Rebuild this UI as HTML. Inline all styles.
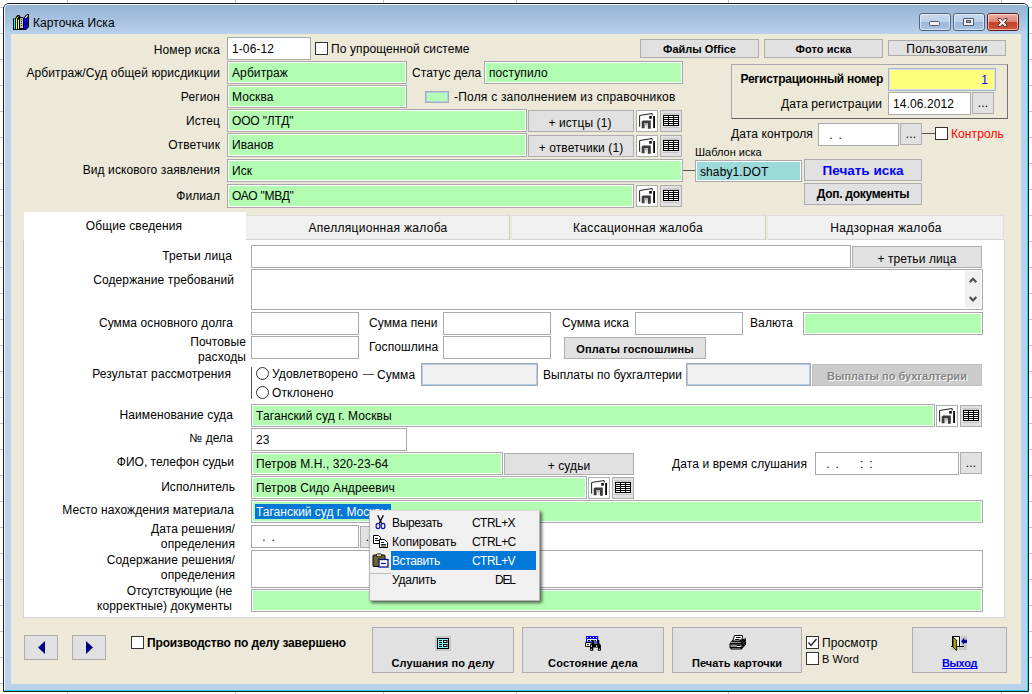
<!DOCTYPE html>
<html lang="ru">
<head>
<meta charset="utf-8">
<title>Карточка Иска</title>
<style>
*{box-sizing:border-box;margin:0;padding:0}
html,body{width:1032px;height:694px;overflow:hidden;background:#fff}
body{position:relative;font-family:"Liberation Sans",Arial,sans-serif;font-size:12px;color:#000;line-height:14px;letter-spacing:0.1px}
.abs,.l,.lr,.f,.b,.ib,.cb,.tab{position:absolute}
/* sheet gridlines behind window */
.gv{position:absolute;top:0;width:1px;height:694px;background:#c4c4c4}
.gh{position:absolute;left:0;width:1032px;height:1px;background:#c4c4c4}
/* window */
#win{position:absolute;left:3px;top:3px;width:1026px;height:689px;border:1px solid #1c1c1c;border-radius:6px 6px 0 0;background:#b9d1ea;overflow:hidden}
#titlegrad{position:absolute;left:0;top:0;width:1024px;height:30px;background:linear-gradient(#98b2d2 0,#a5bfdf 45%,#b9d1ea 100%)}
#inner{position:absolute;left:0;top:0;width:1024px;height:687px;border:1px solid #f0f6fc;border-bottom-color:#20d8f8;border-right-color:#20d8f8;border-radius:5px 5px 0 0}
#client{position:absolute;left:11px;top:34px;width:1010px;height:650px;background:#ece9d8}
/* labels */
.l{white-space:nowrap;height:14px;margin-top:1px}
.lr{white-space:nowrap;text-align:right;height:14px;margin-top:1px}
/* fields */
.f{height:23px;border:1px solid #a9a9a9;box-shadow:inset 0 0 0 1px #fff;background:#fff;padding:4px 0 0 4px;white-space:nowrap;overflow:hidden}
.g{background:#b3fdb3}
.dis{background:#f0f0f0;border-color:#a4a8ae;box-shadow:inset 0 0 0 1px #b4cceb}
/* buttons */
.b{border:1px solid #adadad;background:#e1e1e1;text-align:center;white-space:nowrap;overflow:hidden}
.bold{font-weight:bold;letter-spacing:-0.27px}
.ib{width:22px;height:22px;border:1px solid #adadad;background:#e1e1e1}
.ib.w{background:#fdfdfd}
.cb{width:13px;height:13px;border:1px solid #333;background:#fff}
.m{font-size:12px;letter-spacing:-0.15px}
.ic1,.ic2{position:absolute;left:0;top:0;width:20px;height:20px}

.tb{position:absolute;top:13px;height:18px;border:1px solid #4e647e;border-radius:3px;background:linear-gradient(#c6d8ee 0,#bcd0e8 48%,#9cb8da 52%,#a8c2e2 100%)}
.tbi{position:absolute;left:0;top:0;right:0;bottom:0;border:1px solid rgba(255,255,255,.55);border-radius:2px}
.tc{border-color:#5e1c1c;background:linear-gradient(#eab0a0 0,#dc8878 48%,#c4402a 52%,#d2583c 100%)}
</style>
</head>
<body>
<!-- background sheet grid -->
<div class="gv" style="left:67px"></div><div class="gv" style="left:235px"></div><div class="gv" style="left:383px"></div><div class="gv" style="left:516px"></div><div class="gv" style="left:728px"></div><div class="gv" style="left:1001px"></div>
<div class="gh" style="top:7px"></div><div class="gh" style="top:33px"></div><div class="gh" style="top:59px"></div><div class="gh" style="top:85px"></div><div class="gh" style="top:111px"></div><div class="gh" style="top:137px"></div><div class="gh" style="top:163px"></div><div class="gh" style="top:189px"></div><div class="gh" style="top:215px"></div><div class="gh" style="top:241px"></div><div class="gh" style="top:267px"></div><div class="gh" style="top:293px"></div><div class="gh" style="top:319px"></div><div class="gh" style="top:345px"></div><div class="gh" style="top:371px"></div><div class="gh" style="top:397px"></div><div class="gh" style="top:423px"></div><div class="gh" style="top:449px"></div><div class="gh" style="top:475px"></div><div class="gh" style="top:501px"></div><div class="gh" style="top:527px"></div><div class="gh" style="top:553px"></div><div class="gh" style="top:579px"></div><div class="gh" style="top:605px"></div><div class="gh" style="top:631px"></div><div class="gh" style="top:657px"></div><div class="gh" style="top:683px"></div>

<div id="win">
<div id="titlegrad"></div>
<div id="inner"></div>
</div>
<div id="client"></div>

<!-- TITLE -->
<svg class="abs" style="left:13px;top:14px" width="16" height="16" viewBox="0 0 16 16">
<path d="M0 16V4.5H2L4.3 1H6.5L7.5 3H10V16Z" fill="#000"/>
<path d="M10 16V4L14 0H16V13L13 16Z" fill="#000"/>
<rect x="1" y="5" width="1" height="10" fill="#00ffff"/>
<path d="M3 15V4.5L5.5 2V3L4 4.5V15Z" fill="#ffff00"/>
<rect x="5" y="5.5" width="1" height="9.5" fill="#e4e4e4"/>
<rect x="7" y="4" width="3" height="10" fill="#c8c0b0"/>
<rect x="8" y="5" width="1" height="1" fill="#1a2a80"/><rect x="8" y="7" width="1" height="1" fill="#1a2a80"/><rect x="8" y="9" width="1" height="1" fill="#1a2a80"/><rect x="8" y="11" width="1" height="1" fill="#1a2a80"/>
<rect x="11" y="4" width="2" height="11" fill="#0000ff"/>
<rect x="14" y="3" width="1" height="10.5" fill="#0000ff"/>
<path d="M11.5 3.8L14 1.2H15V2L13 4Z" fill="#f0dede"/>
</svg>
<div class="tb" style="left:919px;width:32px"><div class="tbi"></div><div class="abs" style="left:9px;top:7px;width:11px;height:5px;border:1px solid #4a5a70;border-radius:1.5px;background:#f4f0e8"></div></div>
<div class="tb" style="left:953px;width:32px"><div class="tbi"></div><div class="abs" style="left:9px;top:4px;width:11px;height:8px;border:1px solid #4a5a70;border-radius:1px;background:#f4f0e8"></div><div class="abs" style="left:12px;top:6px;width:5px;height:3px;border:1px solid #4a5a70;background:#8aa6c8"></div></div>
<div class="tb tc" style="left:987px;width:32px"><div class="tbi"></div><svg class="abs" style="left:8px;top:2.5px" width="13" height="11" viewBox="0 0 13 11"><path d="M2 1.5 L4.3 1.5 L6.5 3.7 L8.7 1.5 L11 1.5 L11 3 L8.5 5.5 L11 8 L11 9.5 L8.7 9.5 L6.5 7.3 L4.3 9.5 L2 9.5 L2 8 L4.5 5.5 L2 3Z" fill="#f4f0ec" stroke="#5a3030" stroke-width="1"/></svg></div>

<div class="l" style="left:33px;top:15px;font-size:12px">Карточка Иска</div>

<!-- TOP SECTION -->
<div class="lr" style="left:20px;width:200px;top:42px">Номер иска</div>
<div class="f" style="left:227px;top:37px;width:84px">1-06-12</div>
<div class="cb" style="left:315px;top:42px"></div>
<div class="l" style="left:331px;top:41px">По упрощенной системе</div>

<div class="lr" style="left:20px;width:200px;top:65px">Арбитраж/Суд общей юрисдикции</div>
<div class="f g" style="left:227px;top:61px;width:180px">Арбитраж</div>
<div class="l" style="left:412px;top:65px">Статус дела</div>
<div class="f g" style="left:484px;top:61px;width:199px">поступило</div>

<div class="lr" style="left:20px;width:200px;top:89px">Регион</div>
<div class="f g" style="left:227px;top:85px;width:180px">Москва</div>
<div class="abs" style="left:425px;top:91px;width:24px;height:12px;background:#b3fdb3;border:1px solid #a4acb8;box-shadow:inset 0 0 0 1px #b4cceb"></div>
<div class="l" style="left:454px;top:89px;letter-spacing:0.21px">-Поля с заполнением из справочников</div>

<div class="lr" style="left:20px;width:200px;top:113px">Истец</div>
<div class="f g" style="left:227px;top:109px;width:300px;letter-spacing:-0.15px">ООО "ЛТД"</div>
<div class="b" style="left:528px;top:110px;width:106px;height:22px;padding:5px 2px 0 0">+ истцы (1)</div>

<div class="lr" style="left:20px;width:200px;top:137px">Ответчик</div>
<div class="f g" style="left:227px;top:133px;width:300px;height:24px">Иванов</div>
<div class="b" style="left:528px;top:135px;width:106px;height:22px;padding-top:5px">+ ответчики (1)</div>

<div class="lr" style="left:20px;width:200px;top:162px">Вид искового заявления</div>
<div class="f g" style="left:227px;top:159px;width:456px">Иск</div>

<div class="lr" style="left:20px;width:200px;top:188px">Филиал</div>
<div class="f g" style="left:227px;top:184px;width:407px;height:24px;letter-spacing:-0.25px">ОАО "МВД"</div>


<!-- icon buttons top -->
<div class="ib w" style="left:636px;top:110px"><svg class="ic1" viewBox="0 0 20 20"><path d="M2.6 15.7V4.5L15.2 2.5V4.6" fill="none" stroke="#222" stroke-width="1"/><rect x="12.2" y="5" width="2.6" height="2.7" fill="#111"/><rect x="16.2" y="5" width="1.8" height="12" fill="#000"/><path d="M4.7 17.3V10.6L6 9.6H13.8V17.8H10.9V12H7.6V17.3Z" fill="#3c3c3c"/><rect x="7.6" y="12" width="3.3" height="2.6" fill="#b4b4b4"/><rect x="3.6" y="11" width="1.1" height="5.5" fill="#c4c4c4"/><rect x="8.6" y="14.6" width="2.3" height="2.7" fill="#e0e0e0"/></svg></div>
<div class="ib" style="left:660px;top:110px"><svg class="ic2" viewBox="0 0 20 20"><rect x="2" y="2.5" width="16" height="1" fill="#b5b5b5"/><rect x="2" y="4" width="16" height="11" fill="#000"/><rect x="3" y="5" width="4" height="1" fill="#fff"/><rect x="8" y="5" width="4" height="1" fill="#fff"/><rect x="13" y="5" width="4" height="1" fill="#fff"/><rect x="3" y="7" width="4" height="1" fill="#fff"/><rect x="8" y="7" width="4" height="1" fill="#fff"/><rect x="13" y="7" width="4" height="1" fill="#fff"/><rect x="3" y="9" width="4" height="1" fill="#fff"/><rect x="8" y="9" width="4" height="1" fill="#fff"/><rect x="13" y="9" width="4" height="1" fill="#fff"/><rect x="3" y="11" width="4" height="1" fill="#fff"/><rect x="8" y="11" width="4" height="1" fill="#fff"/><rect x="13" y="11" width="4" height="1" fill="#fff"/><rect x="3" y="13" width="4" height="1" fill="#fff"/><rect x="8" y="13" width="4" height="1" fill="#fff"/><rect x="13" y="13" width="4" height="1" fill="#fff"/><rect x="2" y="16" width="16" height="1" fill="#c4c4c4"/></svg></div>
<div class="ib w" style="left:636px;top:135px"><svg class="ic1" viewBox="0 0 20 20"><path d="M2.6 15.7V4.5L15.2 2.5V4.6" fill="none" stroke="#222" stroke-width="1"/><rect x="12.2" y="5" width="2.6" height="2.7" fill="#111"/><rect x="16.2" y="5" width="1.8" height="12" fill="#000"/><path d="M4.7 17.3V10.6L6 9.6H13.8V17.8H10.9V12H7.6V17.3Z" fill="#3c3c3c"/><rect x="7.6" y="12" width="3.3" height="2.6" fill="#b4b4b4"/><rect x="3.6" y="11" width="1.1" height="5.5" fill="#c4c4c4"/><rect x="8.6" y="14.6" width="2.3" height="2.7" fill="#e0e0e0"/></svg></div>
<div class="ib" style="left:660px;top:135px"><svg class="ic2" viewBox="0 0 20 20"><rect x="2" y="2.5" width="16" height="1" fill="#b5b5b5"/><rect x="2" y="4" width="16" height="11" fill="#000"/><rect x="3" y="5" width="4" height="1" fill="#fff"/><rect x="8" y="5" width="4" height="1" fill="#fff"/><rect x="13" y="5" width="4" height="1" fill="#fff"/><rect x="3" y="7" width="4" height="1" fill="#fff"/><rect x="8" y="7" width="4" height="1" fill="#fff"/><rect x="13" y="7" width="4" height="1" fill="#fff"/><rect x="3" y="9" width="4" height="1" fill="#fff"/><rect x="8" y="9" width="4" height="1" fill="#fff"/><rect x="13" y="9" width="4" height="1" fill="#fff"/><rect x="3" y="11" width="4" height="1" fill="#fff"/><rect x="8" y="11" width="4" height="1" fill="#fff"/><rect x="13" y="11" width="4" height="1" fill="#fff"/><rect x="3" y="13" width="4" height="1" fill="#fff"/><rect x="8" y="13" width="4" height="1" fill="#fff"/><rect x="13" y="13" width="4" height="1" fill="#fff"/><rect x="2" y="16" width="16" height="1" fill="#c4c4c4"/></svg></div>
<div class="ib w" style="left:636px;top:185px"><svg class="ic1" viewBox="0 0 20 20"><path d="M2.6 15.7V4.5L15.2 2.5V4.6" fill="none" stroke="#222" stroke-width="1"/><rect x="12.2" y="5" width="2.6" height="2.7" fill="#111"/><rect x="16.2" y="5" width="1.8" height="12" fill="#000"/><path d="M4.7 17.3V10.6L6 9.6H13.8V17.8H10.9V12H7.6V17.3Z" fill="#3c3c3c"/><rect x="7.6" y="12" width="3.3" height="2.6" fill="#b4b4b4"/><rect x="3.6" y="11" width="1.1" height="5.5" fill="#c4c4c4"/><rect x="8.6" y="14.6" width="2.3" height="2.7" fill="#e0e0e0"/></svg></div>
<div class="ib" style="left:660px;top:185px"><svg class="ic2" viewBox="0 0 20 20"><rect x="2" y="2.5" width="16" height="1" fill="#b5b5b5"/><rect x="2" y="4" width="16" height="11" fill="#000"/><rect x="3" y="5" width="4" height="1" fill="#fff"/><rect x="8" y="5" width="4" height="1" fill="#fff"/><rect x="13" y="5" width="4" height="1" fill="#fff"/><rect x="3" y="7" width="4" height="1" fill="#fff"/><rect x="8" y="7" width="4" height="1" fill="#fff"/><rect x="13" y="7" width="4" height="1" fill="#fff"/><rect x="3" y="9" width="4" height="1" fill="#fff"/><rect x="8" y="9" width="4" height="1" fill="#fff"/><rect x="13" y="9" width="4" height="1" fill="#fff"/><rect x="3" y="11" width="4" height="1" fill="#fff"/><rect x="8" y="11" width="4" height="1" fill="#fff"/><rect x="13" y="11" width="4" height="1" fill="#fff"/><rect x="3" y="13" width="4" height="1" fill="#fff"/><rect x="8" y="13" width="4" height="1" fill="#fff"/><rect x="13" y="13" width="4" height="1" fill="#fff"/><rect x="2" y="16" width="16" height="1" fill="#c4c4c4"/></svg></div>

<!-- TOP RIGHT -->
<div class="b bold" style="left:640px;top:39px;width:119px;height:19px;padding-top:2px;font-size:11px;letter-spacing:0">Файлы Office</div>
<div class="b bold" style="left:764px;top:39px;width:119px;height:19px;padding-top:2px;font-size:11px;letter-spacing:0.05px">Фото иска</div>
<div class="b" style="left:888px;top:40px;width:118px;height:16px;padding-top:1px;letter-spacing:0.25px">Пользователи</div>

<div class="abs" style="left:731px;top:64px;width:277px;height:55px;border:1px solid #a6a6ae;border-right-color:#757575;border-bottom-color:#606060"></div>
<div class="lr bold" style="left:700px;width:183px;top:71px">Регистрационный номер</div>
<div class="f" style="left:888px;top:68px;width:108px;background:#ffff80;border-color:#9fb4cc;box-shadow:inset 0 0 0 1px #d8e2ee;color:#0000ff;text-align:right;padding-right:7px">1</div>
<div class="lr" style="left:700px;width:182px;top:96px">Дата регистрации</div>
<div class="f" style="left:888px;top:92px;width:83px">14.06.2012</div>
<div class="b" style="left:972px;top:92px;width:22px;height:22px;padding-top:3px">...</div>

<div class="l" style="left:731px;top:126px">Дата контроля</div>
<div class="f" style="left:818px;top:123px;width:81px;letter-spacing:-0.25px">&nbsp;&nbsp;.&nbsp;&nbsp;.</div>
<div class="b" style="left:900px;top:123px;width:22px;height:22px;padding-top:3px">...</div>
<div class="abs" style="left:922px;top:133px;width:13px;height:1px;background:#555"></div>
<div class="cb" style="left:935px;top:127px"></div>
<div class="l" style="left:951px;top:126px;color:#ff0000;letter-spacing:0.1px">Контроль</div>

<div class="l" style="left:695px;top:144px;font-size:11px;letter-spacing:0">Шаблон иска</div>
<div class="abs" style="left:683px;top:170px;width:13px;height:1px;background:#555"></div>
<div class="f" style="left:695px;top:160px;width:107px;height:22px;background:#9cd9d9">shaby1.DOT</div>
<div class="b bold" style="left:804px;top:159px;width:118px;height:22px;padding-top:4px;font-size:13.5px;color:#0000ff;letter-spacing:0">Печать иска</div>
<div class="b bold" style="left:804px;top:183px;width:118px;height:22px;padding-top:3px">Доп. документы</div>

<!-- TABS -->
<div class="abs" style="left:24px;top:215px;width:980px;height:25px;background:#f0f0f0;border:1px solid #dedede;border-bottom-color:#d4d4d4"></div>
<div class="abs" style="left:509px;top:215px;width:3px;height:25px;background:#ece9d8;border-left:1px solid #cfcfd2"></div>
<div class="abs" style="left:765px;top:215px;width:3px;height:25px;background:#ece9d8;border-left:1px solid #cfcfd2"></div>
<div class="abs" style="left:24px;top:212px;width:222px;height:30px;background:#fff"></div>
<div class="abs" id="page" style="left:23px;top:240px;width:982px;height:378px;background:#fff;border:1px solid #d6d6d6;border-top:0"></div>
<div class="l" style="left:34px;width:200px;text-align:center;top:218px">Общие сведения</div>
<div class="l" style="left:278px;width:200px;text-align:center;top:220px;letter-spacing:0.3px">Апелляционная жалоба</div>
<div class="l" style="left:538px;width:200px;text-align:center;top:220px;letter-spacing:0.3px">Кассационная жалоба</div>
<div class="l" style="left:786px;width:200px;text-align:center;top:220px;letter-spacing:0.35px">Надзорная жалоба</div>


<!-- TAB CONTENT -->
<div class="lr" style="left:32px;width:200px;top:248px">Третьи лица</div>
<div class="f" style="left:251px;top:245px;width:600px"></div>
<div class="b" style="left:852px;top:246px;width:130px;height:22px;padding-top:5px">+ третьи лица</div>

<div class="lr" style="left:34px;width:200px;top:272px">Содержание требований</div>
<div class="f" style="left:251px;top:269px;width:732px;height:41px"></div>
<div class="abs" style="left:965px;top:271px;width:16px;height:37px;background:#f0f0f0"></div>
<svg class="abs" style="left:965px;top:271px" width="16" height="37" viewBox="0 0 16 37"><path d="M4.7 11.3 L8 7.8 L11.3 11.3 M4.7 26 L8 29.5 L11.3 26" fill="none" stroke="#505050" stroke-width="2.1"/></svg>

<div class="lr" style="left:33px;width:200px;top:315px">Сумма основного долга</div>
<div class="f" style="left:251px;top:312px;width:108px"></div>
<div class="l" style="left:369px;top:315px">Сумма пени</div>
<div class="f" style="left:443px;top:312px;width:108px"></div>
<div class="l" style="left:562px;top:315px">Сумма иска</div>
<div class="f" style="left:635px;top:312px;width:108px"></div>
<div class="l" style="left:750px;top:315px">Валюта</div>
<div class="f g" style="left:803px;top:312px;width:180px"></div>

<div class="lr" style="left:46px;width:200px;top:334px">Почтовые</div>
<div class="lr" style="left:46px;width:200px;top:349px">расходы</div>
<div class="f" style="left:251px;top:336px;width:108px"></div>
<div class="l" style="left:369px;top:339px">Госпошлина</div>
<div class="f" style="left:443px;top:336px;width:108px"></div>
<div class="b bold" style="left:564px;top:337px;width:142px;height:22px;padding-top:4px;font-size:11px;letter-spacing:0.1px">Оплаты госпошлины</div>

<div class="lr" style="left:31px;width:200px;top:366px">Результат рассмотрения</div>
<div class="abs" style="left:251px;top:367px;width:1px;height:32px;background:#555"></div>
<div class="abs" style="left:256px;top:367px;width:13px;height:13px;border:1px solid #333;border-radius:50%;background:#fff"></div>
<div class="l" style="left:272px;top:366px">Удовлетворено</div>
<div class="abs" style="left:363px;top:374px;width:11px;height:1px;background:#555"></div>
<div class="l" style="left:377px;top:367px">Сумма</div>
<div class="f dis" style="left:421px;top:363px;width:117px"></div>
<div class="l" style="left:543px;top:367px;letter-spacing:0">Выплаты по бухгалтерии</div>
<div class="f dis" style="left:686px;top:363px;width:125px"></div>
<div class="b bold" style="left:812px;top:364px;width:170px;height:22px;padding-top:4px;font-size:11px;letter-spacing:0;background:#cccccc;border-color:#bfbfbf;color:#838383;text-shadow:1px 1px 0 #fff">Выплаты по бухгалтерии</div>
<div class="abs" style="left:256px;top:386px;width:13px;height:13px;border:1px solid #333;border-radius:50%;background:#fff"></div>
<div class="l" style="left:272px;top:385px">Отклонено</div>

<div class="lr" style="left:33px;width:200px;top:407px">Наименование суда</div>
<div class="f g" style="left:251px;top:404px;width:684px">Таганский суд г. Москвы</div>
<div class="ib w" style="left:936px;top:405px"><svg class="ic1" viewBox="0 0 20 20"><path d="M2.6 15.7V4.5L15.2 2.5V4.6" fill="none" stroke="#222" stroke-width="1"/><rect x="12.2" y="5" width="2.6" height="2.7" fill="#111"/><rect x="16.2" y="5" width="1.8" height="12" fill="#000"/><path d="M4.7 17.3V10.6L6 9.6H13.8V17.8H10.9V12H7.6V17.3Z" fill="#3c3c3c"/><rect x="7.6" y="12" width="3.3" height="2.6" fill="#b4b4b4"/><rect x="3.6" y="11" width="1.1" height="5.5" fill="#c4c4c4"/><rect x="8.6" y="14.6" width="2.3" height="2.7" fill="#e0e0e0"/></svg></div>
<div class="ib" style="left:960px;top:405px"><svg class="ic2" viewBox="0 0 20 20"><rect x="2" y="2.5" width="16" height="1" fill="#b5b5b5"/><rect x="2" y="4" width="16" height="11" fill="#000"/><rect x="3" y="5" width="4" height="1" fill="#fff"/><rect x="8" y="5" width="4" height="1" fill="#fff"/><rect x="13" y="5" width="4" height="1" fill="#fff"/><rect x="3" y="7" width="4" height="1" fill="#fff"/><rect x="8" y="7" width="4" height="1" fill="#fff"/><rect x="13" y="7" width="4" height="1" fill="#fff"/><rect x="3" y="9" width="4" height="1" fill="#fff"/><rect x="8" y="9" width="4" height="1" fill="#fff"/><rect x="13" y="9" width="4" height="1" fill="#fff"/><rect x="3" y="11" width="4" height="1" fill="#fff"/><rect x="8" y="11" width="4" height="1" fill="#fff"/><rect x="13" y="11" width="4" height="1" fill="#fff"/><rect x="3" y="13" width="4" height="1" fill="#fff"/><rect x="8" y="13" width="4" height="1" fill="#fff"/><rect x="13" y="13" width="4" height="1" fill="#fff"/><rect x="2" y="16" width="16" height="1" fill="#c4c4c4"/></svg></div>

<div class="lr" style="left:33px;width:200px;top:430px">№ дела</div>
<div class="f" style="left:251px;top:428px;width:156px">23</div>

<div class="lr" style="left:34px;width:200px;top:454px;letter-spacing:0">ФИО, телефон судьи</div>
<div class="f g" style="left:251px;top:452px;width:252px">Петров М.Н., 320-23-64</div>
<div class="b" style="left:504px;top:453px;width:130px;height:22px;padding-top:5px">+ судьи</div>
<div class="l" style="left:672px;top:456px">Дата и время слушания</div>
<div class="f" style="left:815px;top:452px;width:144px;letter-spacing:-0.25px">&nbsp;&nbsp;.&nbsp;&nbsp;.&nbsp;&nbsp;&nbsp;&nbsp;&nbsp;&nbsp;&nbsp;:&nbsp;&nbsp;:</div>
<div class="b" style="left:960px;top:452px;width:22px;height:22px;padding-top:3px">...</div>

<div class="lr" style="left:35px;width:200px;top:479px">Исполнитель</div>
<div class="f g" style="left:251px;top:476px;width:336px">Петров Сидо Андреевич</div>
<div class="ib w" style="left:588px;top:477px"><svg class="ic1" viewBox="0 0 20 20"><path d="M2.6 15.7V4.5L15.2 2.5V4.6" fill="none" stroke="#222" stroke-width="1"/><rect x="12.2" y="5" width="2.6" height="2.7" fill="#111"/><rect x="16.2" y="5" width="1.8" height="12" fill="#000"/><path d="M4.7 17.3V10.6L6 9.6H13.8V17.8H10.9V12H7.6V17.3Z" fill="#3c3c3c"/><rect x="7.6" y="12" width="3.3" height="2.6" fill="#b4b4b4"/><rect x="3.6" y="11" width="1.1" height="5.5" fill="#c4c4c4"/><rect x="8.6" y="14.6" width="2.3" height="2.7" fill="#e0e0e0"/></svg></div>
<div class="ib" style="left:612px;top:477px"><svg class="ic2" viewBox="0 0 20 20"><rect x="2" y="2.5" width="16" height="1" fill="#b5b5b5"/><rect x="2" y="4" width="16" height="11" fill="#000"/><rect x="3" y="5" width="4" height="1" fill="#fff"/><rect x="8" y="5" width="4" height="1" fill="#fff"/><rect x="13" y="5" width="4" height="1" fill="#fff"/><rect x="3" y="7" width="4" height="1" fill="#fff"/><rect x="8" y="7" width="4" height="1" fill="#fff"/><rect x="13" y="7" width="4" height="1" fill="#fff"/><rect x="3" y="9" width="4" height="1" fill="#fff"/><rect x="8" y="9" width="4" height="1" fill="#fff"/><rect x="13" y="9" width="4" height="1" fill="#fff"/><rect x="3" y="11" width="4" height="1" fill="#fff"/><rect x="8" y="11" width="4" height="1" fill="#fff"/><rect x="13" y="11" width="4" height="1" fill="#fff"/><rect x="3" y="13" width="4" height="1" fill="#fff"/><rect x="8" y="13" width="4" height="1" fill="#fff"/><rect x="13" y="13" width="4" height="1" fill="#fff"/><rect x="2" y="16" width="16" height="1" fill="#c4c4c4"/></svg></div>

<div class="lr" style="left:34px;width:200px;top:502px">Место нахождения материала</div>
<div class="f g" style="left:251px;top:500px;width:732px"><span style="background:#0078d7;color:#fff;display:inline-block;height:15px;padding:1px 2px 0 1px;margin:-1px 0 0 -1px;letter-spacing:0">Таганский суд г. Москвы</span></div>

<div class="lr" style="left:35px;width:200px;top:521px">Дата решения/</div>
<div class="lr" style="left:35px;width:200px;top:536px">определения</div>
<div class="f" style="left:251px;top:525px;width:108px;letter-spacing:-0.25px">&nbsp;&nbsp;.&nbsp;&nbsp;.</div>
<div class="b" style="left:360px;top:526px;width:22px;height:22px;padding-top:3px">...</div>

<div class="lr" style="left:35px;width:200px;top:552px">Содержание решения/</div>
<div class="lr" style="left:35px;width:200px;top:567px">определения</div>
<div class="f" style="left:251px;top:550px;width:732px;height:38px"></div>

<div class="lr" style="left:32px;width:200px;top:583px;letter-spacing:-0.2px">Отсутствующие (не</div>
<div class="lr" style="left:32px;width:200px;top:598px">корректные) документы</div>
<div class="f g" style="left:251px;top:589px;width:732px"></div>

<!-- BOTTOM -->
<div class="b" style="left:24px;top:635px;width:34px;height:25px"><svg width="32" height="23" viewBox="0 0 32 23"><path d="M20 5 L13 11.5 L20 18Z" fill="#000080"/></svg></div>
<div class="b" style="left:72px;top:635px;width:34px;height:25px"><svg width="32" height="23" viewBox="0 0 32 23"><path d="M13 5 L20 11.5 L13 18Z" fill="#000080"/></svg></div>
<div class="cb" style="left:131px;top:636px"></div>
<div class="l bold" style="left:147px;top:635px;letter-spacing:-0.15px">Производство по делу завершено</div>

<div class="b bold" style="left:372px;top:627px;width:142px;height:46px;padding-top:28px;font-size:11px;letter-spacing:0.1px">Слушания по делу</div>
<div class="b bold" style="left:522px;top:627px;width:142px;height:46px;padding-top:28px;font-size:11px;letter-spacing:0.15px">Состояние дела</div>
<div class="b bold" style="left:672px;top:627px;width:130px;height:46px;padding-top:28px;font-size:11px;letter-spacing:0">Печать карточки</div>
<div class="cb" style="left:806px;top:636px"></div>
<svg class="abs" style="left:806px;top:636px" width="13" height="13" viewBox="0 0 13 13"><path d="M2.5 6.5 L5 9.5 L10.5 3" fill="none" stroke="#222" stroke-width="1.3"/></svg>
<div class="l" style="left:822px;top:635px">Просмотр</div>
<div class="cb" style="left:806px;top:652px"></div>
<div class="l" style="left:822px;top:651px;font-size:11px">В Word</div>
<div class="b bold" style="left:912px;top:627px;width:95px;height:46px;padding-top:28px;font-size:11px;letter-spacing:-0.3px;color:#0000ff;text-decoration:underline;text-decoration-skip-ink:none">Выход</div>

<!-- CONTEXT MENU -->
<div class="abs" id="menu" style="left:369px;top:510px;width:171px;height:91px;background:#f0f0f0;border:1px solid #b4b4b4;border-top-color:#e0e0e0;box-shadow:2px 2px 3px rgba(0,0,0,.6)"></div>
<div class="abs" style="left:391px;top:551px;width:145px;height:19px;background:#0078d7"></div>
<div class="l m" style="left:392px;top:515px;letter-spacing:-0.36px">Вырезать</div><div class="l m" style="left:472px;top:515px;letter-spacing:-0.55px">CTRL+X</div>
<div class="l m" style="left:392px;top:534px;letter-spacing:0">Копировать</div><div class="l m" style="left:472px;top:534px;letter-spacing:-0.55px">CTRL+C</div>
<div class="l m" style="left:392px;top:553px;color:#fff;letter-spacing:-0.39px">Вставить</div><div class="l m" style="left:472px;top:553px;color:#fff;letter-spacing:-0.55px">CTRL+V</div>
<div class="l m" style="left:392px;top:572px;letter-spacing:-0.25px">Удалить</div><div class="l m" style="left:495px;top:572px;letter-spacing:-1.2px">DEL</div>


<!-- bottom icons -->
<svg class="abs" style="left:434px;top:635px" width="18" height="17" viewBox="0 0 18 17">
<rect x="1" y="1" width="16" height="15" fill="#c8c8c8"/>
<rect x="3" y="3" width="12" height="11" fill="#000"/>
<rect x="4" y="4" width="10" height="9" fill="#8ff4f4"/>
<rect x="5" y="5" width="3" height="1" fill="#000"/><rect x="5" y="7" width="3" height="1" fill="#000"/><rect x="5" y="9" width="3" height="1" fill="#000"/><rect x="5" y="11" width="3" height="1" fill="#000"/>
<rect x="9" y="5" width="4.5" height="3" fill="#000"/><rect x="10" y="6" width="2.5" height="1" fill="#fff"/>
<rect x="9" y="9" width="4.5" height="3" fill="#000"/><rect x="10" y="10" width="2.5" height="1" fill="#fff"/>
</svg>
<svg class="abs" style="left:584px;top:635px" width="19" height="17" viewBox="0 0 19 17">
<rect x="2" y="1" width="12.2" height="6.6" fill="#0000ff"/>
<rect x="3" y="2" width="1" height="1" fill="#d8d8a0"/><rect x="6" y="2" width="1" height="1" fill="#d8d8a0"/><rect x="9" y="2" width="1" height="1" fill="#d8d8a0"/><rect x="12" y="2" width="1" height="1" fill="#d8d8a0"/>
<rect x="3" y="4" width="10" height="2.4" fill="#fff"/>
<rect x="4" y="5" width="2" height="1" fill="#000"/><rect x="7" y="5" width="2" height="1" fill="#000"/><rect x="10.5" y="4.8" width="1.4" height="1.4" fill="#000"/>
<rect x="1.1" y="7.1" width="6" height="5" rx="1" fill="#000"/><rect x="2" y="8" width="4.5" height="3.1" fill="#fff"/><rect x="3" y="9.2" width="2" height="1" fill="#000"/>
<path d="M7.7 5.1h2.1v3.2h3.6V5.1h1.9v3.2l1.6 1.6V15.8h-3V12.6h-4.6V15.8h-3.2V9.9l1.6-1.6z" fill="#000"/>
<rect x="7" y="10.2" width="1" height="1.8" fill="#ddd"/><rect x="12.2" y="10.2" width="1" height="1.8" fill="#ddd"/><rect x="7" y="13.8" width="1" height="1" fill="#eee"/><rect x="15" y="13.8" width="1" height="1" fill="#eee"/><rect x="11.2" y="8" width="1" height="1" fill="#bbb"/>
</svg>
<svg class="abs" style="left:728px;top:634px" width="19" height="17" viewBox="0 0 19 17">
<path d="M1.5 9.5L5 5.5H13.5L16.5 4.5H18V10.5L13.5 15.5H3L1.5 13.5Z" fill="#000"/>
<path d="M6.5 1.5H14.5V4L13 5.5L11.5 7H4.8Z" fill="#fff" stroke="#000" stroke-width="1"/>
<rect x="8" y="3" width="4.5" height="1" fill="#000"/><rect x="7" y="5" width="4.5" height="1" fill="#000"/>
<rect x="3" y="8" width="10" height="1" fill="#9a9a9a"/>
<rect x="2.5" y="10.5" width="11" height="2.5" fill="#8c8c8c"/><rect x="9" y="11" width="3.5" height="1" fill="#000"/><rect x="9" y="12" width="3.5" height="1" fill="#fff"/>
<rect x="3.5" y="14" width="9" height="0.8" fill="#777"/>
<path d="M14.5 7.5L16.5 5.5M14.5 10L17 7.5M14.5 12.5L17 9.8" stroke="#aaa" stroke-width="0.8" stroke-dasharray="1 1"/>
</svg>
<svg class="abs" style="left:950px;top:635px" width="19" height="17" viewBox="0 0 19 17">
<rect x="11" y="1" width="6" height="14" fill="#c8c8c8"/><rect x="1.5" y="12" width="9.5" height="3" fill="#c8c8c8"/>
<rect x="2.5" y="1.5" width="7" height="10" fill="#fff" stroke="#000" stroke-width="1"/>
<rect x="1" y="11" width="13" height="1" fill="#000"/>
<path d="M3 2.3L6.6 5V15.6L3 12Z" fill="#a8a014" stroke="#000" stroke-width="0.8"/>
<path d="M11 6.3L14.2 2.8V4.8H17V8H14.2V9.8Z" fill="#0000a0"/>
</svg>
<!-- menu icons -->
<svg class="abs" style="left:372px;top:514px" width="18" height="16" viewBox="0 0 18 16">
<path d="M5.7 1.3L9.6 9.2M11.3 1.3L7.4 9.2" stroke="#000" stroke-width="1.3" fill="none"/>
<ellipse cx="6" cy="12" rx="1.9" ry="2.6" fill="none" stroke="#1010b0" stroke-width="1.2"/><ellipse cx="11" cy="12" rx="1.9" ry="2.6" fill="none" stroke="#1010b0" stroke-width="1.2"/>
</svg>
<svg class="abs" style="left:372px;top:534px" width="18" height="15" viewBox="0 0 18 15">
<path d="M1.5 1.5H6.5L8.5 3.5V9.5H1.5Z" fill="#fff" stroke="#000"/><path d="M3 4.5H6M3 6.5H7" stroke="#000"/>
<path d="M7.5 5.5H12.5L15.5 8.5V13.5H7.5Z" fill="#fff" stroke="#000"/><path d="M9 8.5H12M9 10.5H14M9 12H14" stroke="#000" stroke-width="0.9"/>
</svg>
<svg class="abs" style="left:372px;top:553px" width="18" height="15" viewBox="0 0 18 15">
<rect x="1" y="2" width="12" height="11.5" rx="1" fill="#6a6430" stroke="#000"/>
<rect x="4.5" y="0.8" width="5" height="3" rx="1" fill="#d8d090" stroke="#000" stroke-width="0.8"/>
<rect x="7" y="6.5" width="9" height="7.5" fill="#fff" stroke="#0c0c90" stroke-width="1.3"/><path d="M9 10.5H14" stroke="#0c0c90" stroke-width="1.2"/>
</svg>
<div class="abs" style="left:370px;top:573px;width:21px;height:1px;background:#bdbdbd"></div>

</body>
</html>
